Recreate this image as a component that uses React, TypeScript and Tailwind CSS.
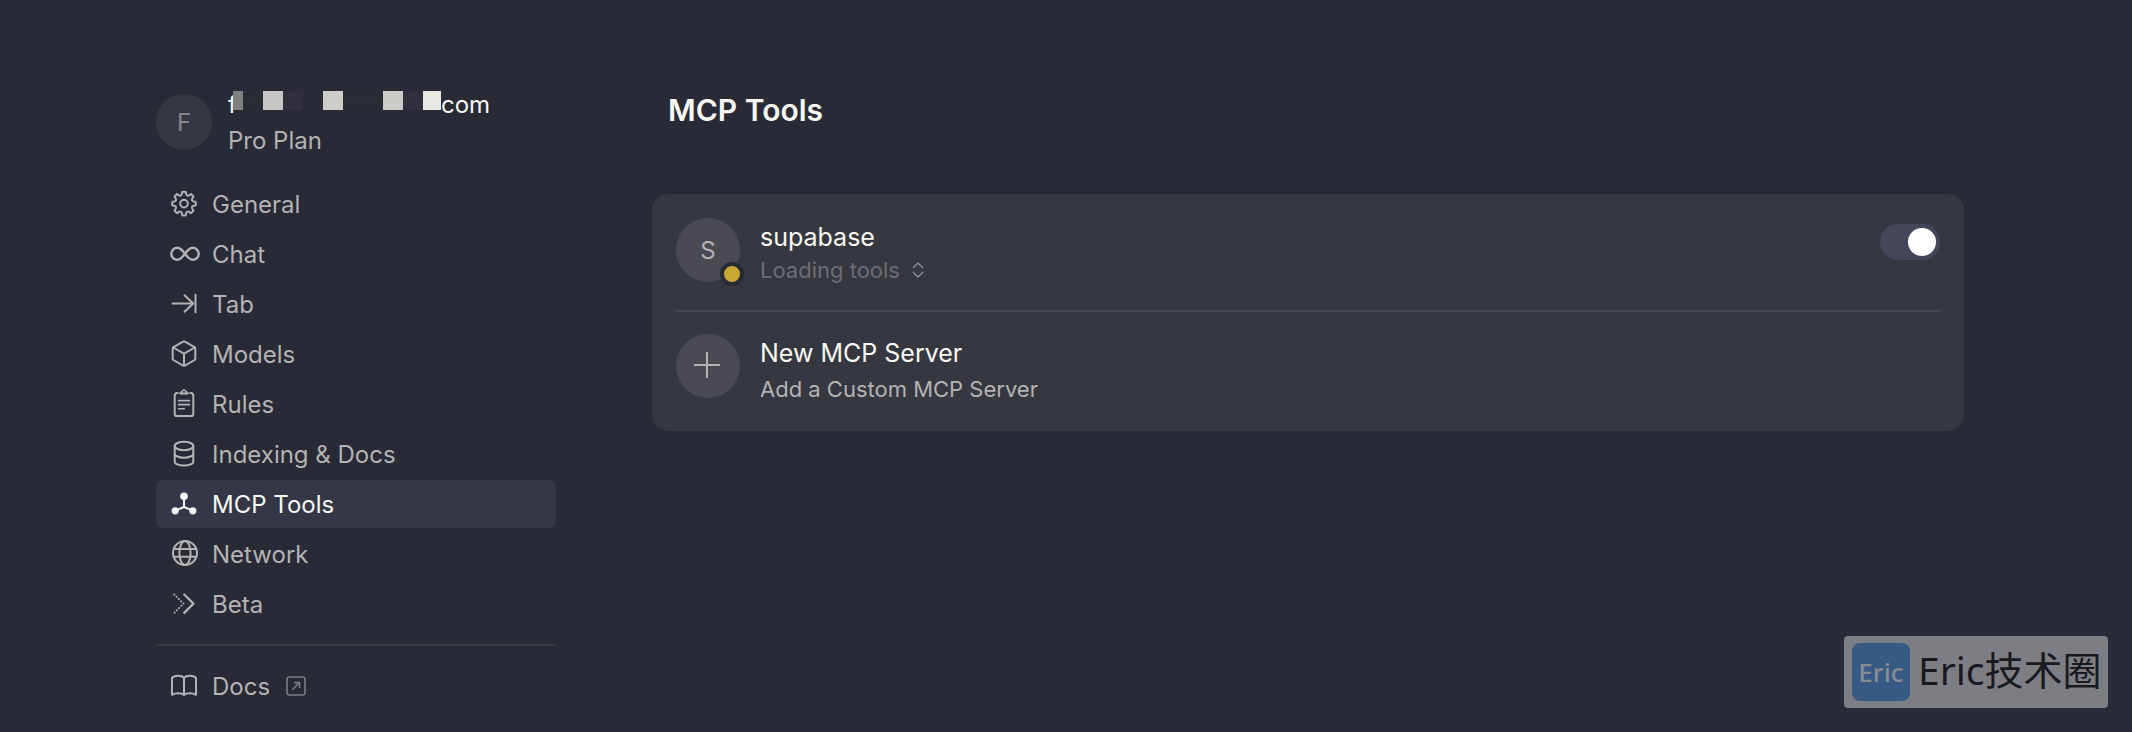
import { useState } from "react";
import type { ReactNode } from "react";
import clsx from "clsx";

// Eight rounded teeth around the hub.
const GEAR_PATH = (() => {
  const at = (deg: number, r: number) => {
    const a = (deg * Math.PI) / 180;
    return `${(14 + r * Math.sin(a)).toFixed(2)} ${(13.6 - r * Math.cos(a)).toFixed(2)}`;
  };
  let d = `M${at(-9, 11.7)}`;
  for (let t = 0; t < 360; t += 45) {
    d += `Q${at(t, 12)} ${at(t + 9, 11.7)}L${at(t + 13, 9.8)}Q${at(t + 22.5, 7.8)} ${at(t + 32, 9.8)}L${at(t + 36, 11.7)}`;
  }
  return d + "Z";
})();

const ICONS: Record<string, ReactNode> = {
  general: (
    <>
      <path d={GEAR_PATH} />
      <circle cx="14" cy="13.6" r="3.8" />
    </>
  ),
  chat: (
    <path
      strokeWidth="2.4"
      d="M15 13.8C12.2 10 10.2 7.8 7.3 7.8a6 6 0 0 0 0 12C10.2 19.8 12.2 17.6 15 13.8S19.8 7.8 22.7 7.8a6 6 0 0 1 0 12C19.8 19.8 17.8 17.6 15 13.8Z"
    />
  ),
  tab: <path d="M2.5 13.5H23M14.5 5.2l8.7 8.3-8.7 8.3M25.5 4.8v17.4" />,
  models: (
    <>
      <path d="M13.2 1.6a1.6 1.6 0 0 1 1.6 0l9.8 5.5a1.2 1.2 0 0 1 .7 1.1v10.6a1.4 1.4 0 0 1-.7 1.2l-9.8 5.6a1.6 1.6 0 0 1-1.6 0L3.4 20a1.4 1.4 0 0 1-.7-1.2V8.2a1.2 1.2 0 0 1 .7-1.1Z" />
      <path d="M3.2 7.5 14 13.6l10.8-6.1M14 13.6v12" />
    </>
  ),
  rules: (
    <>
      <path d="M7.8 3H7A2.4 2.4 0 0 0 4.7 5.4v18.3A2.4 2.4 0 0 0 7 26.1h14a2.4 2.4 0 0 0 2.3-2.4V5.4A2.4 2.4 0 0 0 21 3h-.8" />
      <path d="M8.5 10.6h11M8.5 14.6h11M8.5 18.7h5.8" strokeWidth="1.6" />
      <path
        d="M9.5 4.6V3c0-.9.7-1.4 1.9-1.4C11.6.1 12.5-.8 14-.8s2.4.9 2.6 2.4c1.2 0 1.9.5 1.9 1.4v1.6ZM14 .8a1 1 0 1 0 0 2 1 1 0 0 0 0-2Z"
        fill="currentColor"
        fillRule="evenodd"
        stroke="none"
      />
    </>
  ),
  indexing: (
    <>
      <ellipse cx="14" cy="6" rx="9.3" ry="4.2" />
      <path d="M4.7 6v15.4c0 2.5 4 4.2 9.3 4.2s9.3-1.7 9.3-4.2V6M4.7 13.5c0 2.5 4 4.2 9.3 4.2s9.3-1.7 9.3-4.2" />
    </>
  ),
  mcp: (
    <>
      <path d="M14 6.5V17M14 17l-9 3.8M14 17l9 3.8" />
      <g fill="currentColor" stroke="none">
        <circle cx="14" cy="6.3" r="3.8" />
        <circle cx="5.2" cy="20.8" r="3.6" />
        <circle cx="22.8" cy="20.8" r="3.6" />
      </g>
    </>
  ),
  network: (
    <>
      <circle cx="15" cy="13" r="12" />
      <ellipse cx="15" cy="13" rx="5.6" ry="12" />
      <path d="M3.8 9h22.4M3.8 16.7h22.4" />
    </>
  ),
  beta: (
    <>
      <path d="m14.2 4.5 9.3 9.1-9.3 9.3" strokeWidth="2.2" />
      <path d="m4.2 4.5 9.3 9.1-9.3 9.3" strokeDasharray="0.1 3.1" />
    </>
  ),
  docs: (
    <path d="M14 5.8C11.5 3.3 5.2 3 2 5.8v17c3.5-2 9.5-2 12 .2 2.5-2.2 8.5-2.2 12-.2v-17C22.8 3 16.5 3.3 14 5.8ZM14 5.8V23" />
  ),
};

const NAV_ITEMS = [
  { id: "general", label: "General" },
  { id: "chat", label: "Chat" },
  { id: "tab", label: "Tab" },
  { id: "models", label: "Models" },
  { id: "rules", label: "Rules" },
  { id: "indexing", label: "Indexing & Docs" },
  { id: "mcp", label: "MCP Tools" },
  { id: "network", label: "Network" },
  { id: "beta", label: "Beta" },
];

export default function App() {
  const [active, setActive] = useState("mcp");

  return (
    <div className="relative flex min-h-screen gap-24 bg-[#282a36] pt-[85px] pr-[168px] pb-5 pl-[156px] font-['Inter',sans-serif] text-2xl text-[#b3b3b3]">
      <aside className="w-[400px] shrink-0">
        <Account />
        <nav className="mt-[21px] flex flex-col gap-0.5">
          {NAV_ITEMS.map((item) => (
            <button
              key={item.id}
              type="button"
              onClick={() => setActive(item.id)}
              className={clsx(
                "flex h-12 items-center gap-3.5 rounded-lg px-3.5 text-left",
                active === item.id && "bg-[#343746] text-[#f8f8f2]",
              )}
            >
              <NavIcon id={item.id} />
              <span className="pt-0.5">{item.label}</span>
            </button>
          ))}
        </nav>
        <hr className="my-4 border-t-2 border-[#363841]" />
        <a href="#docs" className="flex h-12 items-center gap-3.5 px-3.5">
          <NavIcon id="docs" />
          <span className="flex items-center gap-4">
            <span className="pt-0.5">Docs</span>
            <svg
              viewBox="0 0 20 20"
              className="size-5 text-[#7d7e82]"
              fill="none"
              stroke="currentColor"
              strokeWidth="1.6"
              strokeLinejoin="round"
            >
              <rect x="1" y="1" width="18" height="18" rx="2.5" />
              <path d="M6.3 13.7 13.2 6.8M8 6.5h5.5V12" />
            </svg>
          </span>
        </a>
      </aside>

      <main className="min-w-0 flex-1">
        <h1 className="pt-[5px] pl-4 text-3xl leading-10 font-semibold text-[#f8f8f2]">
          MCP Tools
        </h1>
        <section className="mt-16 rounded-2xl bg-[#363841] px-6">
          <SupabaseServer />
          <button
            type="button"
            className="flex w-full gap-5 pt-[22px] pb-[25px] text-left"
          >
            <span className="flex size-16 shrink-0 items-center justify-center rounded-full bg-[#4a4a52]">
              <svg
                viewBox="0 0 28 28"
                className="size-7"
                stroke="currentColor"
                strokeWidth="2"
              >
                <path d="M13 0v26M0 13h26" />
              </svg>
            </span>
            <span className="flex flex-col">
              <span className="text-[25px] leading-[38px] text-[#f8f8f2]">
                New MCP Server
              </span>
              <span className="text-[22px] leading-[34px]">
                Add a Custom MCP Server
              </span>
            </span>
          </button>
        </section>
      </main>

      <Watermark />
    </div>
  );
}

function NavIcon({ id }: { id: string }) {
  return (
    <svg
      viewBox="0 0 28 28"
      className="size-7 shrink-0 overflow-visible"
      fill="none"
      stroke="currentColor"
      strokeWidth="2"
      strokeLinecap="round"
      strokeLinejoin="round"
      aria-hidden="true"
    >
      {ICONS[id]}
    </svg>
  );
}

function Account() {
  return (
    <div className="flex items-center gap-4">
      <div className="flex size-14 items-center justify-center rounded-full bg-[#363841] pt-0.5 text-[#84858a]">
        F
      </div>
      <div className="pt-0.5 leading-9">
        <div className="flex text-[#f8f8f2]">
          <span className="w-[5px]">f</span>
          <span className="z-10 mt-1 flex h-[19px]">
            <span className="w-2.5 bg-[#808080]" />
            <span className="w-5 bg-[#2a2c34]" />
            <span className="w-5 bg-[#c6c6c4]" />
            <span className="w-5 bg-[#302f3b]" />
            <span className="w-5" />
            <span className="w-5 bg-[#cdcec9]" />
            <span className="w-10 bg-[#2a2c34]" />
            <span className="w-5 bg-[#cbccc7]" />
            <span className="w-5 bg-[#302f3b]" />
            <span className="w-[18px] bg-[#e8e9e3]" />
          </span>
          com
        </div>
        <div>Pro Plan</div>
      </div>
    </div>
  );
}

function SupabaseServer() {
  const [enabled, setEnabled] = useState(true);

  return (
    <div className="flex gap-5 border-b-2 border-[#464850] pt-6 pb-[26px]">
      <div className="relative flex size-16 shrink-0 items-center justify-center rounded-full bg-[#4a4a52] pt-0.5">
        S
        <span className="absolute -right-1 -bottom-1 size-6 rounded-full border-4 border-[#282a36] bg-[#c9a733]" />
      </div>
      <div className="flex-1">
        <div className="text-[25px] leading-[38px] text-[#f8f8f2]">
          supabase
        </div>
        <button
          type="button"
          className="flex items-center gap-3 text-[22px] leading-7 text-[#6c6d72]"
        >
          Loading tools
          <svg
            viewBox="0 0 12 16"
            className="h-4 w-3 text-[#909195]"
            fill="none"
            stroke="currentColor"
            strokeWidth="1.4"
          >
            <path d="m1 6 5-5 5 5M1 10l5 5 5-5" />
          </svg>
        </button>
      </div>
      <label className="mt-1.5 flex h-9 w-15 cursor-pointer items-center rounded-full bg-[#44475a] p-1">
        <input
          type="checkbox"
          role="switch"
          aria-label="Enable supabase"
          checked={enabled}
          onChange={(e) => setEnabled(e.target.checked)}
          className="peer sr-only"
        />
        <span className="size-7 rounded-full bg-white peer-checked:ml-6" />
      </label>
    </div>
  );
}

function Watermark() {
  return (
    <div className="absolute right-6 bottom-6 flex h-[72px] w-[264px] items-center gap-2 rounded bg-[#7d7e83] pl-2 whitespace-nowrap">
      <span className="flex size-[58px] shrink-0 items-center justify-center rounded-lg bg-[#375a84] font-['Noto_Sans',sans-serif] text-[26px] font-medium text-[#868b94]">
        Eric
      </span>
      <span className="pb-1 font-['Noto_Sans','Noto_Sans_CJK_SC',sans-serif] text-[39px] leading-[56px] text-[#191a21]">
        Eric技术圈
      </span>
    </div>
  );
}
